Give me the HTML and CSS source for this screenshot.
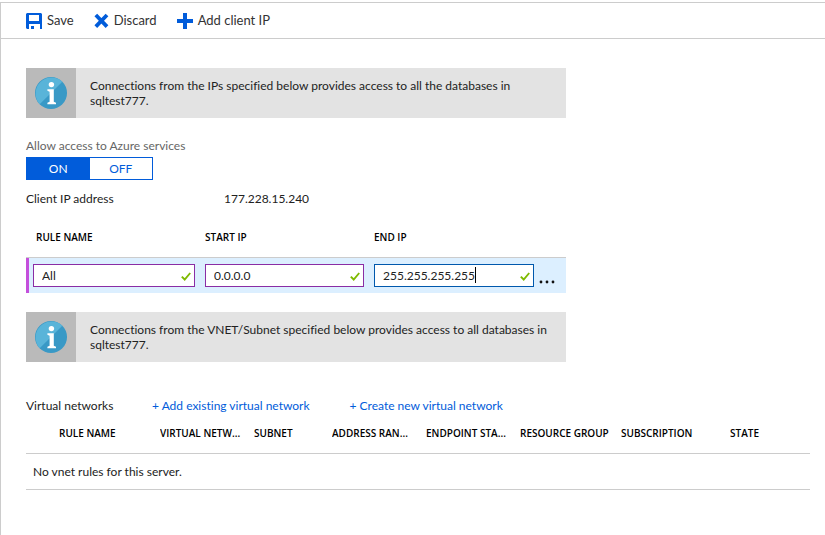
FILE: index.html
```html
<!DOCTYPE html>
<html lang="en">
<head>
<meta charset="utf-8">
<title>Firewall settings</title>
<link rel="stylesheet" href="styles.css">
</head>
<body>
<svg class="defs" aria-hidden="true">
  <symbol id="info" viewBox="0 0 32 32">
    <circle cx="16" cy="16" r="16" fill="#3999c6"/>
    <path d="M4.7 27.3A16 16 0 0 1 27.3 4.7Z" fill="#59b4d9"/>
    <circle cx="16.4" cy="7.6" r="2.7" fill="#fff"/>
    <path d="M12.4 12.2h6.4v12.6l2.2.9v1.5h-8.6v-1.5l2.2-.9v-10l-2.2-1z" fill="#fff"/>
  </symbol>
  <symbol id="check" viewBox="0 0 10 9">
    <path d="M.8 4.6 3.7 7.5 9.2 1" fill="none" stroke="#7fba00" stroke-width="1.9"/>
  </symbol>
</svg>
<main class="blade">
  <div class="toolbar">
    <button class="command" type="button">
      <svg width="16" height="16" viewBox="0 0 16 16" aria-hidden="true"><path fill="#015cda" fill-rule="evenodd" d="M1 0h14l1 1v15h-2v-5H3v5H1l-1-1V1zM3 2v6h10V2zM5 13h3v3H5z"/></svg>
      Save
    </button>
    <button class="command" type="button">
      <svg width="15" height="16" viewBox="0 0 15 16" aria-hidden="true"><path fill="none" stroke="#015cda" stroke-width="3.8" d="M1.8 2 13 13.6M13 2 1.8 13.6"/></svg>
      Discard
    </button>
    <button class="command" type="button">
      <svg width="16" height="16" viewBox="0 0 16 16" aria-hidden="true"><path fill="#015cda" d="M6 0h4v6h6v4h-6v6H6v-6H0V6h6z"/></svg>
      Add client IP
    </button>
  </div>
  <div class="content">
    <div class="banner">
      <div class="banner-icon"><svg width="32" height="32" aria-hidden="true"><use href="#info"/></svg></div>
      <p class="banner-text">Connections from the IPs specified below provides access to all the databases in sqltest777.</p>
    </div>

    <div class="access">
      <span class="access-label" id="access-label">Allow access to Azure services</span>
      <div class="toggle" role="group" aria-labelledby="access-label">
        <button class="option selected" type="button" aria-pressed="true">ON</button>
        <button class="option" type="button" aria-pressed="false">OFF</button>
      </div>
    </div>

    <div class="client">
      <span class="client-label">Client IP address</span>
      <span>177.228.15.240</span>
    </div>

    <table class="rules">
      <colgroup><col class="r-name"><col class="r-start"><col class="r-end"><col class="r-more"></colgroup>
      <thead>
        <tr><th id="h-name">RULE NAME</th><th id="h-start">START IP</th><th id="h-end">END IP</th><th></th></tr>
      </thead>
      <tbody>
        <tr>
          <td><div class="field"><input type="text" value="All" aria-labelledby="h-name"><svg class="check" aria-hidden="true"><use href="#check"/></svg></div></td>
          <td><div class="field"><input type="text" value="0.0.0.0" aria-labelledby="h-start"><svg class="check" aria-hidden="true"><use href="#check"/></svg></div></td>
          <td><div class="field"><input class="active" type="text" value="255.255.255.255" aria-labelledby="h-end"><span class="caret"></span><svg class="check" aria-hidden="true"><use href="#check"/></svg></div></td>
          <td><button class="more" type="button" aria-label="More"><svg width="16" height="4" viewBox="0 0 16 4" aria-hidden="true"><g fill="#111"><circle cx="2" cy="2" r="1.4"/><circle cx="8" cy="2" r="1.4"/><circle cx="14" cy="2" r="1.4"/></g></svg></button></td>
        </tr>
      </tbody>
    </table>

    <div class="banner">
      <div class="banner-icon"><svg width="32" height="32" aria-hidden="true"><use href="#info"/></svg></div>
      <p class="banner-text">Connections from the VNET/Subnet specified below provides access to all databases in sqltest777.</p>
    </div>

    <div class="networks">
      <span class="networks-label">Virtual networks</span>
      <a href="#">+ Add existing virtual network</a>
      <a href="#">+ Create new virtual network</a>
    </div>

    <table class="vnets">
      <colgroup><col class="v-name"><col class="v-net"><col class="v-subnet"><col class="v-range"><col class="v-status"><col class="v-group"><col class="v-sub"><col class="v-state"></colgroup>
      <thead>
        <tr><th>RULE NAME</th><th>VIRTUAL NETW...</th><th>SUBNET</th><th>ADDRESS RAN...</th><th>ENDPOINT STA...</th><th>RESOURCE GROUP</th><th>SUBSCRIPTION</th><th>STATE</th></tr>
      </thead>
      <tbody>
        <tr><td colspan="8">No vnet rules for this server.</td></tr>
      </tbody>
    </table>
  </div>
</main>
</body>
</html>
```
FILE: styles.css
```css
* { box-sizing: border-box; }

body {
  margin: 0;
  padding-top: 2px;
  background: #fff;
  color: #222;
  font: 12px/15px Lato, "Open Sans", sans-serif;
  font-variant-ligatures: none;
}

button, input { font: inherit; font-variant-ligatures: none; color: inherit; }
button { border: 0; padding: 0; background: none; cursor: pointer; }
a { color: #015cda; text-decoration: none; }
table { border-collapse: separate; border-spacing: 0; table-layout: fixed; }

.defs { position: absolute; width: 0; height: 0; }

.blade {
  min-height: calc(100vh - 2px);
  border-top: 1px solid #ccc;
  border-left: 1px solid #ccc;
}

.toolbar {
  display: flex;
  gap: 20px;
  height: 36px;
  padding-left: 25px;
  border-bottom: 1px solid #ccc;
}

.command { display: flex; align-items: center; gap: 5px; color: #333; font-size: 13px; }

.content { padding: 29px 15px 0 25px; }

.banner { display: flex; max-width: 540px; height: 50px; background: #e3e3e3; }
.banner-icon {
  display: flex;
  align-items: center;
  justify-content: center;
  flex: 0 0 50px;
  background: #bababa;
}
.banner-text { margin: 0; padding: 10px 14px; }

.access { padding-top: 20px; }
.access-label { display: block; margin-bottom: 4px; color: #666; }

.toggle { display: flex; width: 127px; height: 23px; border: 1px solid #015cda; }
.option { flex: 1; color: #015cda; }
.option.selected { background: #015cda; color: #fff; }

.client { display: flex; margin-top: 11px; }
.client-label { width: 198px; }

th {
  padding: 0 8px 0 0;
  overflow: hidden;
  color: #000;
  font-family: "Open Sans", sans-serif;
  font-size: 10px;
  font-weight: 600;
  text-align: left;
  text-overflow: ellipsis;
  white-space: nowrap;
}

.rules { width: 100%; max-width: 540px; margin: 12px 0 19px; }
.rules th { height: 40px; border-bottom: 1px solid #ccc; }
.rules th:first-child { padding-left: 10px; }
.rules td { height: 35px; padding: 0 10px 0 0; background: #dcefff; }
.rules td:first-child { padding-left: 4px; border-left: 3px solid #c44fdb; }
.rules td:nth-child(3) { padding-right: 5px; }
.rules td:last-child { padding: 8px 0 0; }
.r-name { width: 179px; }
.r-start { width: 169px; }
.r-end { width: 165px; }

.field { position: relative; }
.field input {
  display: block;
  width: 100%;
  height: 23px;
  padding: 0 24px 0 8px;
  border: 1px solid #8a2da5;
  outline: 0;
  background: #fff;
}
.field input.active { border-color: #0058ad; }
.caret { position: absolute; top: 3px; left: 101px; width: 1px; height: 16px; background: #000; }
.check { position: absolute; top: 8px; right: 4px; width: 10px; height: 9px; }
.more { display: block; }

.networks { display: flex; gap: 40px; margin-top: 36px; white-space: nowrap; }
.networks-label { width: 86px; }

.vnets { width: 100%; margin-top: 1px; }
.vnets th { height: 40px; border-bottom: 1px solid #ccc; }
.vnets th:first-child { padding-left: 33px; }
.vnets td { height: 36px; padding: 0 7px; border-bottom: 1px solid #ccc; }
.v-name { width: 134px; }
.v-net { width: 94px; }
.v-subnet { width: 78px; }
.v-range { width: 94px; }
.v-status { width: 94px; }
.v-group { width: 101px; }
.v-sub { width: 109px; }
.v-state { width: 80px; }
```
